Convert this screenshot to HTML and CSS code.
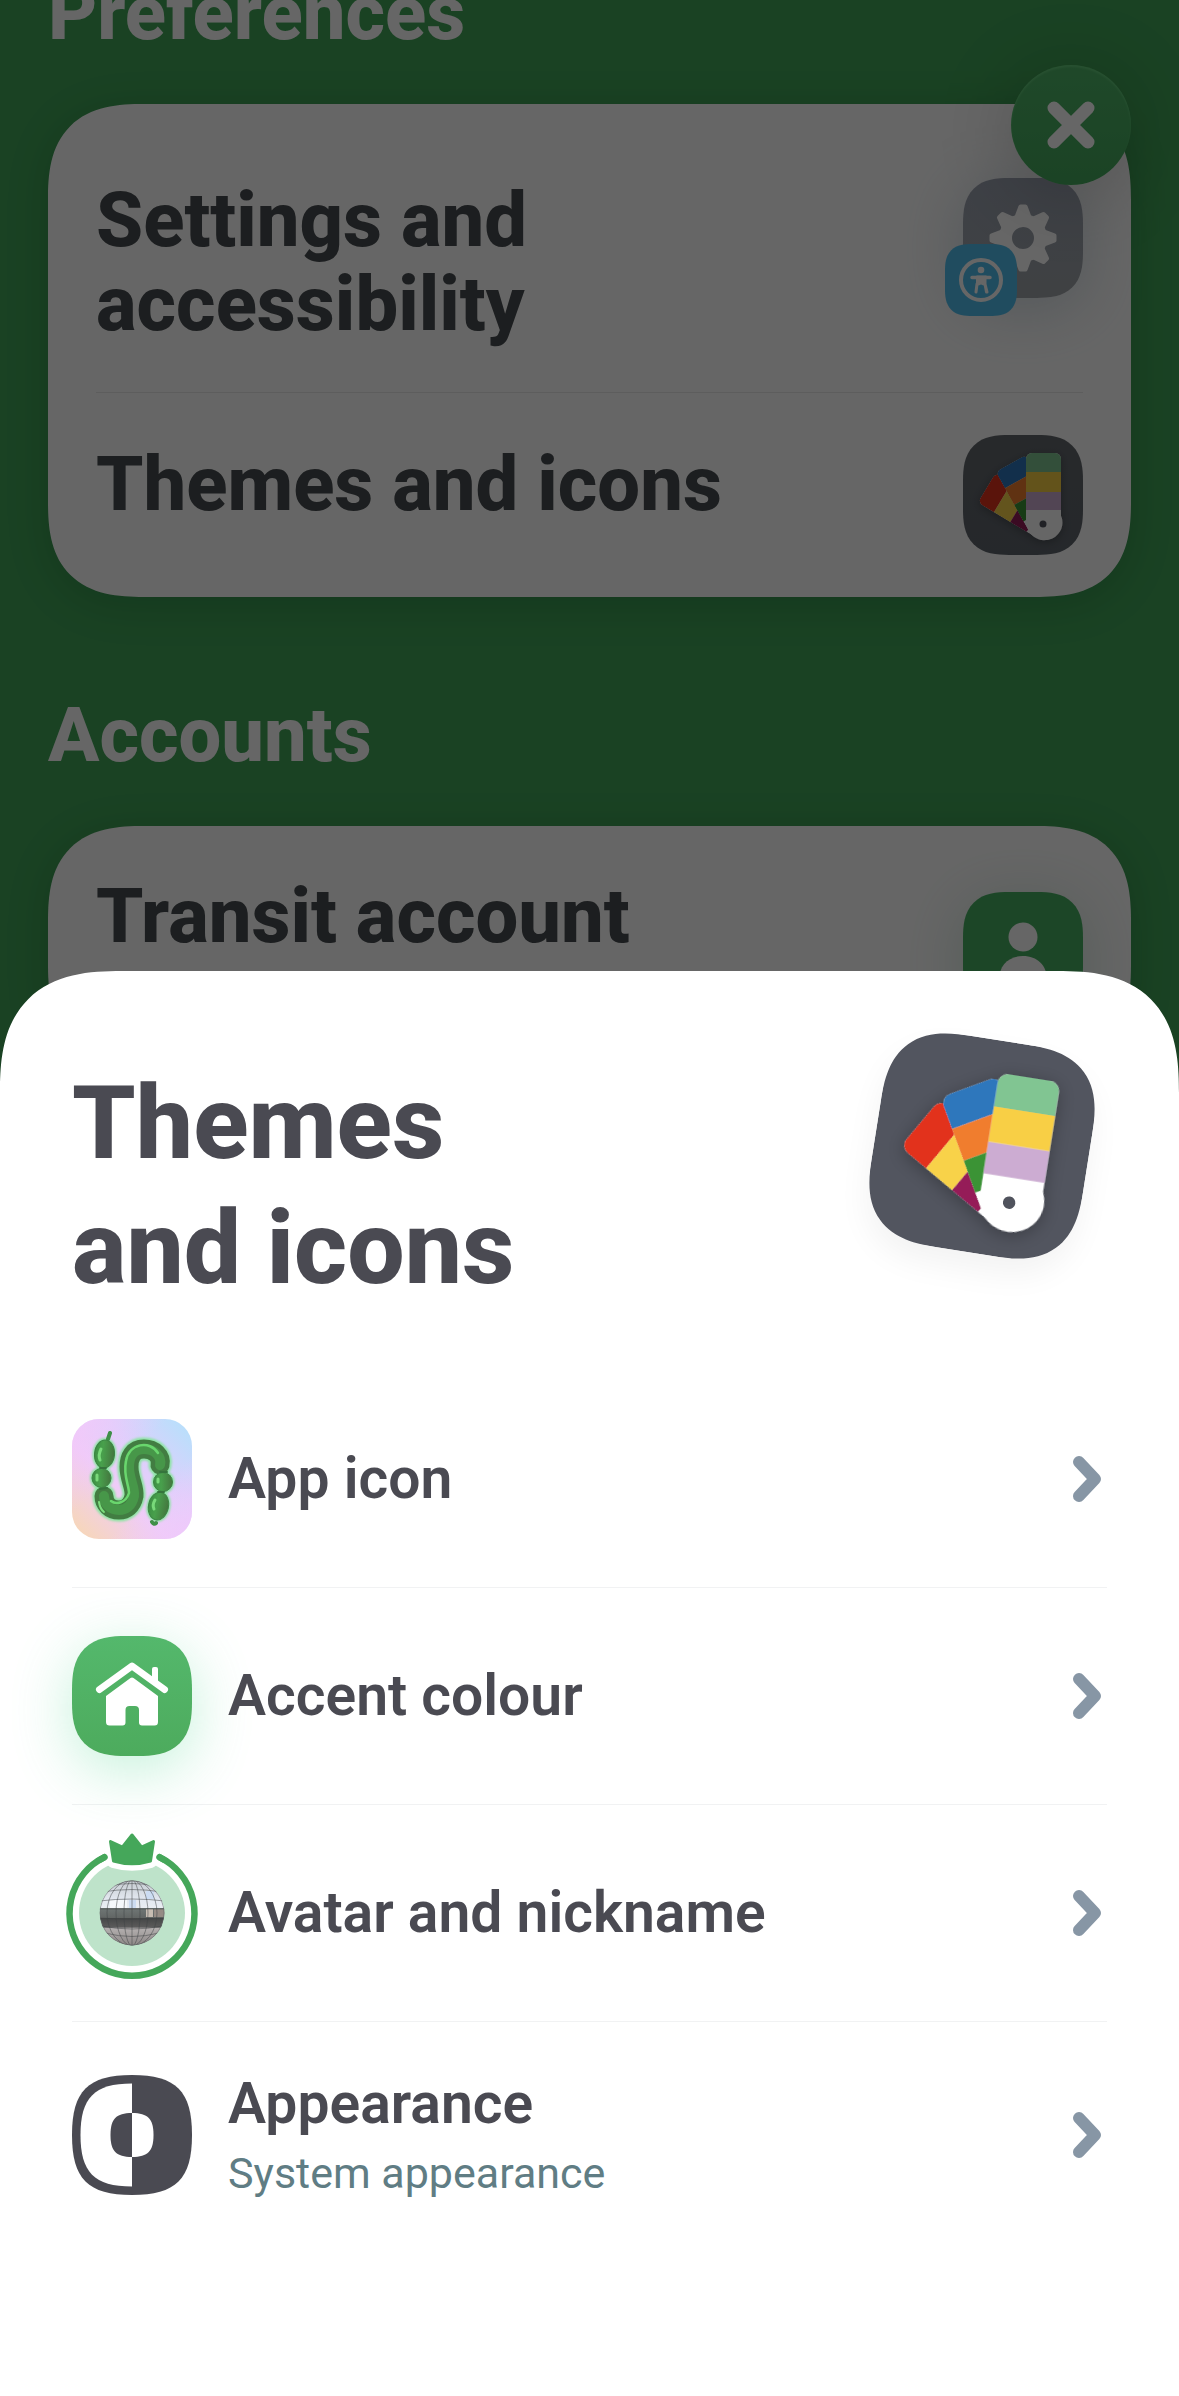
FILE: index.html
```html
<!DOCTYPE html>
<html lang="en">
<head>
<meta charset="utf-8">
<meta name="viewport" content="width=device-width, initial-scale=1">
<title>Themes and icons</title>
<link rel="stylesheet" href="styles.css">
</head>
<body>
<svg class="symbols" aria-hidden="true">
  <defs>
    <clipPath id="strip-clip"><path d="M63 24a6 6 0 0 1 6-6h23a6 6 0 0 1 6 6v62a17 17 0 0 1-35 0z"/></clipPath>
    <filter id="strip-shadow" x="-40%" y="-40%" width="180%" height="180%">
      <feDropShadow dx="0" dy="2" stdDeviation="5" flood-color="#000" flood-opacity=".28"/>
    </filter>
    <symbol id="swatches" viewBox="0 0 120 120">
      <g filter="url(#strip-shadow)">
        <g transform="rotate(-59 80 87) translate(0 3)"><g clip-path="url(#strip-clip)">
          <path fill="#fff" d="M63 18h35v86H63z"/><path fill="#e2301f" d="M63 18h35v19H63z"/><path fill="#f8d248" d="M63 37h35v19H63z"/><path fill="#951a59" d="M63 56h35v19H63z"/>
        </g></g>
        <g transform="rotate(-29 80 87) translate(0 2)"><g clip-path="url(#strip-clip)">
          <path fill="#fff" d="M63 18h35v86H63z"/><path fill="#2f77bc" d="M63 18h35v19H63z"/><path fill="#f07d2e" d="M63 37h35v19H63z"/><path fill="#3a9335" d="M63 56h35v19H63z"/>
        </g></g>
        <g clip-path="url(#strip-clip)">
          <path fill="#fff" d="M63 18h35v86H63z"/><path fill="#81c592" d="M63 18h35v19H63z"/><path fill="#f8cf45" d="M63 37h35v20H63z"/><path fill="#ccacd2" d="M63 57h35v18H63z"/>
        </g>
      </g>
      <circle cx="80" cy="89" r="3.5" fill="#50535d"/>
    </symbol>
    <symbol id="chevron" viewBox="0 0 28 46">
      <path d="M6 6L22 23L6 40" fill="none" stroke="#8796a5" stroke-width="12" stroke-linecap="round" stroke-linejoin="round"/>
    </symbol>
  </defs>
</svg>

<div class="screen">
  <main class="page">
    <h2 class="section-title">Preferences</h2>
    <section class="card">
      <a class="card-row card-row--settings" href="#settings">
        <span class="card-label">Settings and<br>accessibility</span>
        <span class="tile tile--settings">
          <svg viewBox="0 0 120 120" aria-hidden="true">
            <circle cx="60" cy="60" r="17.5" fill="none" stroke="#fff" stroke-width="13"/>
            <g fill="#fff">
              <path id="tooth" d="M51 40L55.500 28Q56 26.500 57.500 26.500H62.500Q64 26.500 64.500 28L69 40Z"/>
              <use href="#tooth" transform="rotate(45 60 60)"/><use href="#tooth" transform="rotate(90 60 60)"/><use href="#tooth" transform="rotate(135 60 60)"/><use href="#tooth" transform="rotate(180 60 60)"/><use href="#tooth" transform="rotate(225 60 60)"/><use href="#tooth" transform="rotate(270 60 60)"/><use href="#tooth" transform="rotate(315 60 60)"/>
            </g>
          </svg>
          <span class="tile-badge">
            <svg viewBox="0 0 72 72" aria-hidden="true">
              <circle cx="36" cy="36" r="20" fill="none" stroke="#fff" stroke-width="4"/>
              <circle cx="36" cy="26" r="3.300" fill="#fff"/>
              <path d="M27 33.500H45M36 34V39" fill="none" stroke="#fff" stroke-width="3.500" stroke-linecap="round"/>
              <path d="M32 33H40V40L41.500 48M40 40L42 48M32 40L31 48" fill="none" stroke="#fff" stroke-width="3" stroke-linecap="round"/>
              <path d="M31 33H41V42L37 41L36 39L35 41L31 42Z" fill="#fff"/>
            </svg>
          </span>
        </span>
      </a>
      <a class="card-row card-row--themes" href="#themes">
        <span class="card-label">Themes and icons</span>
        <span class="tile tile--themes"><svg aria-hidden="true"><use href="#swatches"/></svg></span>
      </a>
    </section>

    <h2 class="section-title">Accounts</h2>
    <section class="card">
      <a class="card-row card-row--account" href="#account">
        <span class="card-label">Transit account</span>
        <span class="tile tile--account">
          <svg viewBox="0 0 120 120" aria-hidden="true">
            <circle cx="60" cy="45" r="14.500" fill="#fff"/>
            <path d="M36 88c0-15 10-24 24-24s24 9 24 24q0 5-5 5H41q-5 0-5-5z" fill="#fff"/>
          </svg>
        </span>
      </a>
    </section>
    <button class="close" type="button" aria-label="Close">
      <svg viewBox="0 0 48 48" aria-hidden="true"><path d="M7 7L41 41M41 7L7 41" stroke="#fff" stroke-width="13" stroke-linecap="round"/></svg>
    </button>
  </main>

  <div class="scrim"></div>

  <section class="sheet" role="dialog" aria-labelledby="sheet-title">
    <header class="sheet-header">
      <h1 class="sheet-title" id="sheet-title">Themes<br>and icons</h1>
      <span class="hero"><svg aria-hidden="true"><use href="#swatches"/></svg></span>
    </header>
    <nav class="options">
      <button class="option" type="button">
        <svg class="option-icon" viewBox="0 0 120 120" aria-hidden="true">
          <defs>
            <linearGradient id="sky" x1="0" y1="1" x2="1" y2="0"><stop offset="0" stop-color="#f8d8b0"/><stop offset=".4" stop-color="#efccf8"/><stop offset=".65" stop-color="#dcd0fc"/><stop offset="1" stop-color="#b2e2fb"/></linearGradient>
            <linearGradient id="blush" x1="0" y1="0" x2="1" y2="1"><stop offset="0" stop-color="#f3c8fa" stop-opacity=".8"/><stop offset=".4" stop-color="#f3c8fa" stop-opacity="0"/><stop offset=".65" stop-color="#f0ccfa" stop-opacity="0"/><stop offset="1" stop-color="#f0c8fb"/></linearGradient>
            <linearGradient id="balloon" x1="0" y1="0" x2="1" y2="0"><stop offset="0" stop-color="#3d8f44"/><stop offset=".4" stop-color="#48a04c"/><stop offset="1" stop-color="#44763f"/></linearGradient>
            <filter id="soft" x="-20%" y="-20%" width="140%" height="140%"><feGaussianBlur stdDeviation="1"/></filter>
            <g id="beads"><ellipse cx="32.500" cy="35" rx="10" ry="14" transform="rotate(5 32 35)"/><circle cx="29.500" cy="59" r="9.500"/><circle cx="91" cy="63" r="9.500"/><ellipse cx="86.500" cy="87" rx="10" ry="14" transform="rotate(12 86 87)"/></g>
            <path id="tube" d="M88 46C90 37 82 30 72 30C61 30 57 38 57 48C57 60 63 68 62 77C60 87 54 91 47 91C38 91 32 85 32 77"/>
          </defs>
          <rect width="120" height="120" rx="27" fill="url(#sky)"/><rect width="120" height="120" rx="27" fill="url(#blush)"/>
          <g filter="url(#soft)"><use href="#beads" fill="#8ce5a2" stroke="#8ce5a2" stroke-width="4"/><use href="#tube" fill="none" stroke="#8ce5a2" stroke-width="23" stroke-linecap="round"/></g>
          <path d="M36 20L38 14M80 103Q82 106 84 104" stroke="#3f8f48" stroke-width="4" stroke-linecap="round" fill="none"/>
          <use href="#tube" fill="none" stroke="#427d42" stroke-width="19" stroke-linecap="round"/>
          <use href="#tube" fill="none" stroke="#479749" stroke-width="10" stroke-linecap="round"/>
          <path d="M86 34C78 21 57 24 54 42C51 57 57 66 57 74C54 84 44 86 39 82" fill="none" stroke="#69d66d" stroke-width="2.500" stroke-linecap="round"/>
          <path d="M27 83Q28 90 32 93" fill="none" stroke="#7bdd7c" stroke-width="2" stroke-linecap="round"/>
          <use href="#beads" fill="url(#balloon)" stroke="#3c8544" stroke-width="1"/>
          <g fill="none" stroke="#79d97a" stroke-width="3" stroke-linecap="round"><path d="M29 30Q26 36 28 41M25 56L25 61M86 60L86 63M83 81Q80 86 82 90"/></g>
          <path d="M28 49L34 49M28 70L35 69M88 53L95 53M86 73L92 73" stroke="#35743c" stroke-width="2" stroke-linecap="round"/>
        </svg>
        <span class="option-text"><span class="option-label">App icon</span></span>
        <svg class="chevron" aria-hidden="true"><use href="#chevron"/></svg>
      </button>
      <button class="option" type="button">
        <span class="option-icon option-icon--accent">
          <svg viewBox="0 0 120 120" aria-hidden="true">
            <path d="M27.500 53.500L60 30L92.500 53.500" fill="none" stroke="#fff" stroke-width="7" stroke-linecap="round" stroke-linejoin="round"/>
            <path d="M80 46V33Q80 31 82 31H84Q86 31 86 33V50Z" fill="#fff"/>
            <path d="M58.500 42Q60 41 61.500 42L86 60V86Q86 89.500 82.500 89.500H70Q67 89.500 67 86.500V74Q67 70 63 70H57.500Q53.500 70 53.500 74V86.500Q53.500 89.500 50.500 89.500H37.500Q34 89.500 34 86V60Z" fill="#fff"/>
          </svg>
        </span>
        <span class="option-text"><span class="option-label">Accent colour</span></span>
        <svg class="chevron" aria-hidden="true"><use href="#chevron"/></svg>
      </button>
      <button class="option" type="button">
        <svg class="option-icon" viewBox="0 0 120 120" aria-hidden="true">
          <defs>
            <clipPath id="ball"><circle cx="60" cy="60" r="32.500"/></clipPath>
            <linearGradient id="mirror" x1="0" y1="0" x2="0" y2="1"><stop offset="0" stop-color="#c5cbd0"/><stop offset=".3" stop-color="#e4e9f1"/><stop offset=".42" stop-color="#e9edf2"/><stop offset=".43" stop-color="#6f7675"/><stop offset=".57" stop-color="#626665"/><stop offset=".58" stop-color="#454747"/><stop offset=".72" stop-color="#5b5b5b"/><stop offset=".73" stop-color="#b4b0b0"/><stop offset="1" stop-color="#8c8685"/></linearGradient>
          </defs>
          <circle cx="60" cy="60" r="53" fill="#bee3ca"/>
          <path d="M32.500 4.200A62.500 62.500 0 1 0 87.500 4.200" fill="none" stroke="#45a75a" stroke-width="6.500" stroke-linecap="round"/>
          <path d="M38.500-11.500L50.500-6L60-18L69.500-6L81.500-11.500L78.500 8Q60 13.500 41.500 8Z" fill="#45a75a" stroke="#fff" stroke-width="14" stroke-linejoin="round"/>
          <path d="M38.500-11.500L50.500-6L60-18L69.500-6L81.500-11.500L78.500 8Q60 13.500 41.500 8Z" fill="#45a75a" stroke="#45a75a" stroke-width="3" stroke-linejoin="round"/>
          <path d="M32.500 4.200L28 6.800M87.500 4.200L92 6.800" stroke="#45a75a" stroke-width="6.500" stroke-linecap="round"/>
          <g clip-path="url(#ball)">
            <circle cx="60" cy="60" r="32.500" fill="url(#mirror)"/>
            <path d="M74 56h7v8h-7z" fill="#c7bdb3"/><path d="M82 56h11v8H82z" fill="#958b85"/><path d="M38 47h17v8H38z" fill="#f5f8fb"/><path d="M57 47h7v8h-7zM74 38h8v8h-8z" fill="#ccdcf2"/>
            <g fill="none" stroke="#3f4345" stroke-opacity=".5" stroke-width="1"><path d="M60 27V93M27 56H93"/><ellipse cx="60" cy="60" rx="8" ry="33"/><ellipse cx="60" cy="60" rx="16" ry="33"/><ellipse cx="60" cy="60" rx="25" ry="33"/><path d="M27 48Q60 44 93 48M30 39Q60 34 90 39M36 33Q60 28 84 33M27 65Q60 68 93 65M29 73Q60 79 91 73M33 80Q60 87 87 80"/></g>
            <circle cx="60" cy="60" r="32" fill="none" stroke="#65696b" stroke-opacity=".6"/>
          </g>
        </svg>
        <span class="option-text"><span class="option-label">Avatar and nickname</span></span>
        <svg class="chevron" aria-hidden="true"><use href="#chevron"/></svg>
      </button>
      <button class="option" type="button">
        <svg class="option-icon" viewBox="0 0 120 120" aria-hidden="true">
          <path d="M60 0C104 0 120 16 120 60S104 120 60 120S0 104 0 60S16 0 60 0Z" fill="#4a4a52"/>
          <path d="M60 8.500C22 8.500 8.500 23 8.500 60S22 111.500 60 111.500Z" fill="#fff"/>
          <path d="M60 38C44 38 38.500 44 38.500 60S44 82 60 82Z" fill="#4a4a52"/>
          <path d="M60 38C76 38 81.500 44 81.500 60S76 82 60 82Z" fill="#fff"/>
        </svg>
        <span class="option-text"><span class="option-label">Appearance</span><span class="option-note">System appearance</span></span>
        <svg class="chevron" aria-hidden="true"><use href="#chevron"/></svg>
      </button>
    </nav>
  </section>
</div>
</body>
</html>
```

FILE: styles.css
```css
* { box-sizing: border-box; }

body {
  margin: 0;
  font-family: Roboto, "Noto Sans", sans-serif;
  color: #4a4a52;
}

svg { display: block; }
.symbols { position: absolute; width: 0; height: 0; }

.screen {
  position: relative;
  min-height: 100vh;
  overflow: hidden;
  background: #41a558;
}

/* Page underneath, scrolled part of a heading out of view */
.page {
  position: relative;
  margin-top: -29px;
  padding: 0 48px;
}

.section-title {
  margin: 0 0 49px;
  font-size: 76px;
  line-height: 84px;
  font-weight: 800;
  color: #fff;
}

.card {
  margin-bottom: 96px;
  padding: 0 48px;
  border-radius: 76px;
  background: #fff;
  box-shadow: 0 8px 40px rgba(0, 60, 30, .22);
}

.card-row {
  display: flex;
  justify-content: space-between;
  align-items: flex-start;
  text-decoration: none;
  color: #484d50;
}

.card-row--settings { padding: 74px 0 46px; }
.card-row--themes { padding: 42px 0; border-top: 1px solid #e8e8e8; }
.card-row--account { padding: 48px 0; }

.card-label {
  font-size: 76px;
  line-height: 84px;
  font-weight: 800;
}
.card-row--themes .card-label { padding-top: 7px; }

.tile {
  position: relative;
  flex: none;
  width: 120px;
  height: 120px;
  border-radius: 38px;
}
.tile svg { width: 100%; height: 100%; }
.tile--settings { background: linear-gradient(#9ba2b0, #9ea3a8); box-shadow: 0 10px 60px rgba(120, 150, 170, .35); }
.tile--themes { background: linear-gradient(#63686d, #5e646c); }
.tile--account { margin-top: 18px; background: #48b063; box-shadow: 0 10px 60px rgba(72, 150, 110, .25); }

.tile-badge {
  position: absolute;
  left: -18px;
  top: 66px;
  width: 72px;
  height: 72px;
  border-radius: 22px;
  background: #51bfee;
}

.close {
  position: absolute;
  top: 94px;
  right: 48px;
  display: grid;
  place-items: center;
  width: 120px;
  height: 120px;
  padding: 0;
  border: 0;
  border-radius: 50%;
  background: linear-gradient(#4fb568, #44a85c);
  box-shadow: 0 8px 80px rgba(0, 0, 0, .2), inset 0 2px 2px rgba(130, 230, 150, .4);
}
.close svg { width: 48px; height: 48px; }

.scrim {
  position: absolute;
  inset: 0;
  background: rgba(0, 0, 0, .6);
}

/* Bottom sheet over the page */
.sheet {
  position: absolute;
  left: 0;
  right: 0;
  bottom: 0;
  padding: 90px 72px 148px;
  border-radius: 102px 102px 0 0;
  background: #fff;
}

.sheet-header {
  display: flex;
  justify-content: space-between;
  align-items: flex-start;
  padding-right: 18px;
  margin-bottom: 60px;
}

.sheet-title {
  margin: 0;
  font-size: 102px;
  line-height: 125px;
  font-weight: 800;
}

.hero {
  flex: none;
  width: 214px;
  height: 214px;
  margin-top: -22px;
  border-radius: 64px;
  background: #52555f;
  box-shadow: 0 16px 32px rgba(0, 0, 0, .05);
  transform: rotate(9deg);
}
.hero svg { width: 100%; height: 100%; }

.option {
  display: flex;
  align-items: center;
  gap: 36px;
  width: 100%;
  min-height: 217px;
  padding: 44px 6px 44px 0;
  border: 0;
  border-bottom: 1px solid #f1f2f3;
  background: none;
  font: inherit;
  color: inherit;
  text-align: left;
}
.option:last-child { border-bottom: 0; }

.option-icon {
  flex: none;
  width: 120px;
  height: 120px;
  overflow: visible;
}
.option-icon--accent {
  border-radius: 42px;
  background: linear-gradient(#54b86c, #4dab5d);
  box-shadow: 0 14px 60px rgba(70, 210, 140, .32);
}

.option-text { flex: 1; display: flex; flex-direction: column; }
.option-label { font-size: 57px; line-height: 76px; font-weight: 600; }
.option-note { font-size: 43px; line-height: 62px; color: #607d84; }

.chevron { flex: none; width: 28px; height: 46px; }

/* Continuous corners where the browser can draw them */
@supports (corner-shape: squircle) {
  .card, .sheet, .tile, .tile-badge, .hero, .option-icon--accent { corner-shape: superellipse(1.4); }
  .card { border-radius: 96px; }
  .sheet { border-radius: 122px 122px 0 0; }
  .tile { border-radius: 46px; }
  .tile-badge { border-radius: 27px; }
  .hero { border-radius: 78px; }
  .option-icon--accent { border-radius: 54px; }
}
```
